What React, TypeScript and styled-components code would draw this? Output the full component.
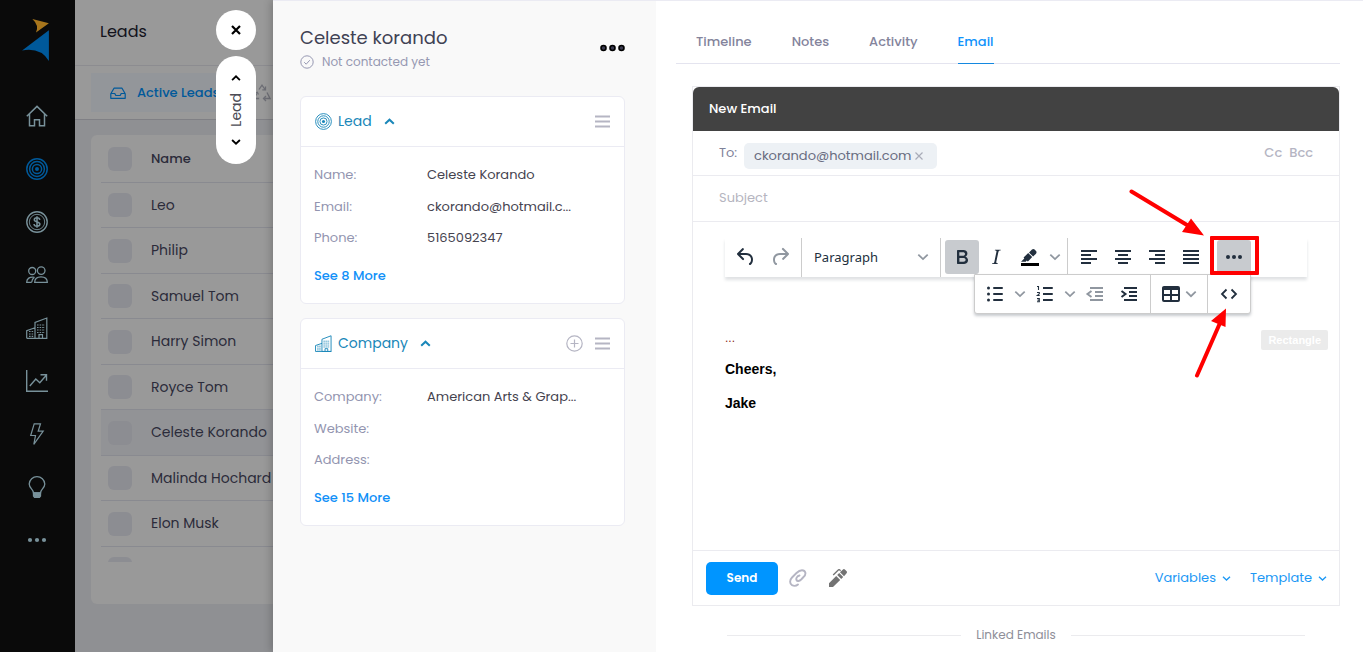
import React from "react";
import styled, { createGlobalStyle } from "styled-components";

const GlobalStyle = createGlobalStyle`
  *, *::before, *::after { box-sizing: border-box; }
  body { margin: 0; background: #fff; font-family: Poppins, Inter, "Liberation Sans", sans-serif; font-size: 13px; }
  button, input, select { font: inherit; color: inherit; }
  button { border: 0; background: none; padding: 0; cursor: pointer; }
  a { text-decoration: none; color: inherit; }
  h1, h2, p, ul, dl, dd { margin: 0; padding: 0; }
  svg { display: block; flex: none; }
`;

/* ---------- icons ---------- */

const Icon = styled.svg.attrs({ "aria-hidden": true })<{ $size?: number; $w?: number }>`
  width: ${(p) => p.$size ?? 22}px;
  height: ${(p) => p.$size ?? 22}px;
  fill: none;
  stroke: currentColor;
  stroke-width: ${(p) => p.$w ?? 1.4};
`;

const Glyph = styled.svg.attrs({ "aria-hidden": true, viewBox: "0 0 24 24" })`
  width: 24px;
  height: 24px;
  fill: currentColor;
`;

const LogoMark = () => (
  <svg width="27" height="42" viewBox="66 57 81 127" aria-hidden="true">
    <path d="M97 57L147 70L108 98Q118 76 97 57Z" fill="#a8761c" />
    <path d="M66 152L147 91V184Q122 142 66 152Z" fill="#00599a" />
  </svg>
);

const TargetIcon = ({ size = 22, w = 1.5 }: { size?: number; w?: number }) => (
  <Icon viewBox="0 0 22 22" $size={size} $w={w}>
    <circle cx="11" cy="11" r="10.2" />
    <circle cx="11" cy="11" r="7.4" />
    <circle cx="11" cy="11" r="4.6" />
    <circle cx="11" cy="11" r="2" fill="currentColor" stroke="none" />
  </Icon>
);

const HomeIcon = () => (
  <Icon viewBox="0 0 22 22" $w={1.5}>
    <path d="M.8 11.2L11 1.4l10.2 9.8M3.5 9v11.8h5v-6h5v6h5V9" />
  </Icon>
);

const CoinIcon = () => (
  <Icon viewBox="0 0 22 22" $w={1.4}>
    <circle cx="11" cy="11" r="10.2" />
    <circle cx="11" cy="11" r="7.7" strokeWidth="0.9" />
    <path d="M13.800 8.800c-.2-1.300-1.300-2-2.800-2s-2.700.7-2.700 2c0 2.800 5.600 1.400 5.600 4.300 0 1.400-1.300 2.100-2.900 2.100s-2.900-.8-3-2.200M11 5.200v11.600" strokeWidth="1.500" />
  </Icon>
);

const PeopleIcon = () => (
  <Icon viewBox="0 0 22 22" $w={1.3}>
    <circle cx="6.200" cy="7" r="3.500" />
    <circle cx="15.200" cy="6.600" r="3.800" />
    <path d="M8.700 18.300c0-3.500 2.200-5.400 6.300-5.400s6.300 1.900 6.300 5.400zM8.500 13.300c-5-.8-7.800 1.400-7.800 5h5M5.700 18.300c.1-2.200 1-3.800 2.800-5" />
  </Icon>
);

const BuildingIcon = ({ size = 22 }: { size?: number }) => (
  <Icon viewBox="0 0 22 22" $size={size} $w={1.2}>
    <path d="M.7 21.300V13.600l8.300-2.800M9 21.300V5.500l11.800-4.500v20.300zM.7 21.300h20.500M13 21v-3.300h3.500V21" />
    <path d="M3 14.500h5M3 17h5M3 19.300h5M11 8h8M11 10.500h8M11 13h8M11 15.500h8" strokeDasharray="1.600 1" />
  </Icon>
);

const TrendIcon = () => (
  <Icon viewBox="0 0 22 22" $w={1.4}>
    <path d="M.7 0v21.300H22M3.800 16l6-7 4 3.800L20.500 5M14.500 4.800h6v6" />
  </Icon>
);

const BoltIcon = () => (
  <Icon viewBox="0 0 22 22" $w={1.2}>
    <path d="M8.200.8h6.300l-2.300 7.400h5L7.800 21.300l1.700-8.800H4.700z" />
  </Icon>
);

const BulbIcon = () => (
  <Icon viewBox="0 0 22 22" $w={1.3}>
    <path d="M7.500 17c0-3.500-4.300-4.800-4.300-9A7.800 7.800 0 0 1 11 .7 7.800 7.800 0 0 1 18.800 8c0 4.200-4.300 5.500-4.300 9z" />
    <path d="M7.500 17h7v3l-1.200 1.500H8.700L7.500 20z" fill="currentColor" />
  </Icon>
);

const DotsIcon = () => (
  <Icon viewBox="0 0 22 22" $w={0}>
    <g fill="currentColor">
      <circle cx="4" cy="11" r="2.100" />
      <circle cx="11" cy="11" r="2.100" />
      <circle cx="18" cy="11" r="2.100" />
    </g>
  </Icon>
);

const ChevronUp = ({ size = 11, w = 2 }: { size?: number; w?: number }) => (
  <Icon viewBox="0 0 11 11" $size={size} $w={w}><path d="M1.200 7.800L5.500 3.700l4.300 4.100" /></Icon>
);
const ChevronDown = ({ size = 11, w = 2 }: { size?: number; w?: number }) => (
  <Icon viewBox="0 0 11 11" $size={size} $w={w}><path d="M1.200 3.300l4.300 4.100 4.300-4.100" /></Icon>
);

const InboxIcon = () => (
  <Icon viewBox="0 0 16 16" $size={16} $w={1.2}>
    <path d="M.8 8.800L4 3.200h8l3.200 5.600v4.500H.8zM.8 8.500h4l1 2h4.400l1-2h4" strokeLinejoin="round" />
  </Icon>
);

const RecycleIcon = () => (
  <Icon viewBox="0 0 18 18" $size={18} $w={1.3}>
    <path d="M6 5.500L9 1.200l3 4.300M12.500 2.500v3.300H9.300M3.700 9.500L1.200 14.500h5M2 9l2.300-.8 1.200 2.300M14 8.500l3 6h-5.500M13 12l-2.500 2.500L13 17" />
  </Icon>
);

const HamburgerIcon = () => (
  <Icon viewBox="0 0 15 15" $size={15} $w={2}><path d="M0 2.500h15M0 7.500h15M0 12.500h15" /></Icon>
);

const PlusCircleIcon = () => (
  <Icon viewBox="0 0 17 17" $size={17} $w={1.2}><circle cx="8.500" cy="8.500" r="7.700" /><path d="M4.500 8.500h8M8.500 4.500v8" /></Icon>
);

const CheckCircleIcon = () => (
  <Icon viewBox="0 0 14 14" $size={14} $w={1}><circle cx="7" cy="7" r="6.200" /><path d="M4.200 7.200l2 2 3.600-4" /></Icon>
);

/* ---------- page shell ---------- */

const Shell = styled.div`
  display: flex;
  min-height: 100vh;
  min-width: 1200px;
`;

const Sidebar = styled.nav`
  flex: 0 0 75px;
  padding-right: 1px;
  background: #0a0a0a;
  color: #78919a;
  display: flex;
  flex-direction: column;
`;

const LogoLink = styled.a`
  height: 89px;
  padding: 19px 22px 0;
`;

const NavLink = styled.a<{ $active?: boolean }>`
  height: 53px;
  display: flex;
  align-items: center;
  justify-content: center;
  color: ${(p) => (p.$active ? "#00599a" : "inherit")};
`;

const LeadsPage = styled.section`
  position: relative;
  flex: 0 0 198px;
  min-width: 0;
  background: #8f9093;
  color: #2b2b3a;
`;

const Clip = styled.div`
  overflow: hidden;
  height: 100%;
  white-space: nowrap;
`;

const LeadsTitle = styled.h1`
  height: 66px;
  line-height: 64px;
  padding-left: 25px;
  font-size: 16px;
  font-weight: 400;
  color: #12121c;
  background: #999;
  border-bottom: 1px solid #8c8c90;
`;

const FilterBar = styled.div`
  height: 54px;
  padding: 7px 0 0 16px;
  display: flex;
  background: #999;
  border-bottom: 1px solid #808085;
`;

const FilterTab = styled.button`
  display: flex;
  align-items: center;
  gap: 11px;
  height: 39px;
  padding: 0 16px 0 19px;
  background: #93969a;
  color: #00599a;
  font-size: 13px;
  font-weight: 500;
`;

const RecycleTab = styled.button`
  height: 39px;
  margin-left: 18px;
  color: #6d6e75;
`;

const LeadsCard = styled.div`
  margin: 15px 0 0 16px;
  padding: 0 0 42px 10px;
  width: 260px;
  background: #999;
  border-radius: 6px;
`;

const LeadsScroll = styled.div`
  height: 427px;
  overflow: hidden;
`;

const LeadsTable = styled.table`
  width: 100%;
  border-spacing: 0;
  font-size: 14px;

  th, td {
    height: 45px;
    padding: 0;
    text-align: left;
    border-bottom: 1px solid #898a90;
    font-weight: 400;
  }
  th { height: 48px; font-weight: 500; font-size: 13px; }
  th:first-child, td:first-child { width: 50px; padding-left: 7px; }
  tbody tr:nth-child(even) td { height: 46px; }
`;

const LeadRow = styled.tr<{ $selected?: boolean }>`
  background: ${(p) => (p.$selected ? "#929396" : "transparent")};
`;

const RowCheck = styled.input.attrs({ type: "checkbox" })`
  appearance: none;
  display: block;
  width: 24px;
  height: 24px;
  margin: 0;
  border-radius: 6px;
  background: #8c8d92;
`;

const DrawerHandles = styled.div`
  position: absolute;
  top: 10px;
  right: 17px;
  z-index: 2;
  display: flex;
  flex-direction: column;
  gap: 6px;
  color: #000;
`;

const CloseButton = styled.button`
  width: 40px;
  height: 40px;
  border-radius: 20px;
  background: #fff;
  display: grid;
  place-items: center;
`;

const Pager = styled.div`
  width: 40px;
  height: 108px;
  padding: 17px 0;
  border-radius: 20px;
  background: #fff;
  display: flex;
  flex-direction: column;
  align-items: center;
  justify-content: space-between;
`;

const PagerLabel = styled.span`
  writing-mode: vertical-rl;
  transform: rotate(180deg);
  color: #4c4c55;
  font-size: 14px;
`;

/* ---------- lead details ---------- */

const Details = styled.aside`
  flex: 0 0 383px;
  padding: 21px 31px 0 27px;
  background: #f9f9f9;
  border-top: 1px solid #ebebf3;
  box-shadow: -2px 0 8px rgba(0, 0, 0, 0.2);
  z-index: 1;
`;

const Person = styled.header`
  display: flex;
  align-items: center;
  justify-content: space-between;
  height: 52px;
  margin-bottom: 22px;
`;

const PersonName = styled.h2`
  font-size: 18px;
  line-height: 27px;
  font-weight: 400;
  color: #3f4254;
`;

const Status = styled.p`
  display: flex;
  align-items: center;
  gap: 8px;
  line-height: 21px;
  font-size: 12px;
  color: #9698b2;
`;

const MoreButton = styled.button`
  color: #08080c;
`;

const InfoCard = styled.section`
  height: 208px;
  margin-bottom: 14px;
  background: #fff;
  border: 1px solid #ebebf3;
  border-radius: 6px;
`;

const InfoHead = styled.header`
  display: flex;
  align-items: center;
  height: 50px;
  padding: 0 14px;
  border-bottom: 1px solid #ebebf3;
  color: #1a87b9;
`;

const InfoToggle = styled.button`
  display: flex;
  align-items: center;
  gap: 6px;
  font-size: 14px;
  margin-right: auto;

  svg:last-child { margin-left: 6px; }
`;

const InfoAction = styled.button`
  margin-left: 12px;
  color: #b5b5c3;
`;

const Fields = styled.dl`
  display: grid;
  grid-template-columns: 113px 1fr;
  grid-auto-rows: 32px 31px;
  align-items: center;
  padding: 12px 14px 0 13px;
  color: #9395b0;
`;

const FieldValue = styled.dd`
  color: #45434f;
  white-space: nowrap;
`;

const SeeMore = styled.a`
  display: inline-block;
  margin: 12px 13px;
  line-height: 20px;
  font-weight: 500;
  color: #1090f8;
`;

/* ---------- email area ---------- */

const Main = styled.main`
  flex: 1 1 0;
  min-width: 0;
  padding: 0 23px 0 20px;
  border-top: 1px solid #ebebf3;
  background: #fff;
  position: relative;
  z-index: 1;
`;

const Tabs = styled.nav`
  display: flex;
  gap: 40px;
  height: 63px;
  padding: 19px 20px 0;
  border-bottom: 1px solid #e4e4ef;
`;

const Tab = styled.a<{ $active?: boolean }>`
  height: 44px;
  line-height: 43px;
  font-weight: 500;
  color: ${(p) => (p.$active ? "#1193fb" : "#84849c")};
  border-bottom: 1px solid ${(p) => (p.$active ? "#1488e0" : "transparent")};
`;

const Composer = styled.form`
  position: relative;
  margin: 22px 0 0 16px;
  border: 1px solid #ebebef;
`;

const ComposerTitle = styled.h2`
  height: 44px;
  padding-left: 16px;
  line-height: 43px;
  font-size: 13px;
  font-weight: 500;
  color: #fff;
  background: #424242;
  border-radius: 6px 6px 0 0;
`;

const AddressRow = styled.div`
  display: flex;
  align-items: flex-start;
  height: 45px;
  padding: 12px 26px 0;
  border-bottom: 1px solid #ebebf0;
  color: #7e8299;
`;

const ToLabel = styled.label`
  width: 25px;
  line-height: 20px;
`;

const Chip = styled.span`
  display: flex;
  align-items: center;
  gap: 4px;
  height: 26px;
  padding: 0 14px 0 10px;
  border-radius: 5px;
  background: #edf1f5;
  color: #686c80;
`;

const ChipRemove = styled.button`
  color: #a9acb8;
`;

const ToInput = styled.input`
  flex: 1;
  min-width: 0;
  border: 0;
  outline: 0;
  background: transparent;
`;

const CopyButton = styled.button`
  margin-left: 7px;
  line-height: 20px;
  font-weight: 500;
  color: #b5b5c3;
`;

const SubjectInput = styled.input`
  display: block;
  width: 100%;
  height: 46px;
  padding: 0 26px 2px;
  border: 0;
  border-bottom: 1px solid #ebebf0;
  outline: 0;

  &::placeholder { color: #b5b5c0; opacity: 1; }
`;

const EditorArea = styled.div`
  height: 329px;
  padding: 16px 32px 0;
  border-bottom: 1px solid #ebebf0;
`;

const Toolbar = styled.div`
  display: flex;
  height: 39px;
  background: #fff;
  box-shadow: 0 3px 3px rgba(34, 47, 62, 0.14);
  color: #222f3e;
`;

const ToolGroup = styled.div`
  position: relative;
  display: flex;
  align-items: flex-start;
  padding: 2px 4px 3px;
  border-right: 1px solid #ccc;

  &:last-child { border-right: 0; }
`;

const Tool = styled.button<{ $pressed?: boolean; $muted?: boolean; $wide?: boolean }>`
  display: flex;
  align-items: center;
  justify-content: center;
  width: ${(p) => (p.$wide ? 48 : 34)}px;
  height: 34px;
  border-radius: 3px;
  background: ${(p) => (p.$pressed ? "#c8cbcf" : "transparent")};
  color: ${(p) => (p.$muted ? "#9097a0" : "#222f3e")};
`;

const Caret = styled.button`
  display: grid;
  place-items: center;
  width: 16px;
  height: 34px;
  color: #9097a0;
`;

const FormatBox = styled.div`
  display: flex;
  align-items: center;
  width: 130px;
  height: 34px;
  padding: 0 7px 0 8px;
  color: #9097a0;
`;

const FormatSelect = styled.select`
  appearance: none;
  flex: 1;
  min-width: 0;
  padding: 0;
  border: 0;
  outline: 0;
  background: transparent;
  font-family: "Noto Sans", "Open Sans", sans-serif;
  font-size: 13px;
  color: #222f3e;
`;

const Overflow = styled.div`
  position: absolute;
  top: 36px;
  right: 4px;
  display: flex;
  height: 40px;
  background: #fff;
  border: 1px solid #ccc;
  border-radius: 0 0 3px 3px;
  box-shadow: 0 2px 3px rgba(34, 47, 62, 0.25);

  ${ToolGroup}:first-child { padding-left: 3px; }
`;

const Highlight = styled.div`
  position: absolute;
  top: -2px;
  left: -3px;
  width: 49px;
  height: 39px;
  border: 4px solid #f00;
  border-radius: 1px;
  pointer-events: none;
`;

const Arrows = styled.svg`
  position: absolute;
  top: -50px;
  left: -84px;
  z-index: 1;
  pointer-events: none;
  fill: #f00;
  stroke: #f00;
`;

const ShapeTag = styled.span`
  position: absolute;
  top: 243px;
  right: 11px;
  padding: 0 7px;
  line-height: 20px;
  border-radius: 2px;
  background: #ebebeb;
  color: #fff;
  font-family: "Liberation Sans", sans-serif;
  font-size: 11px;
  font-weight: 700;
`;

const Message = styled.div`
  padding-top: 52px;
  font-family: "Liberation Sans", sans-serif;
  font-size: 14px;
  font-weight: 700;
  line-height: 20px;
  color: #000;

  p + p { margin-top: 14px; }
  p:first-child { font-weight: 400; font-size: 12px; margin-bottom: -2px; line-height: 18px; color: #8a2b20; }
`;

const ComposerFoot = styled.footer`
  display: flex;
  align-items: center;
  height: 54px;
  padding: 0 12px 0 13px;
`;

const SendButton = styled.button`
  width: 72px;
  height: 33px;
  border-radius: 5px;
  background: #0095ff;
  color: #fff;
  font-size: 12px;
  font-weight: 600;
`;

const FootIcon = styled.button<{ $dark?: boolean }>`
  margin-left: ${(p) => (p.$dark ? 22 : 11)}px;
  color: ${(p) => (p.$dark ? "#737373" : "#b5b5c3")};
`;

const MenuButton = styled.button`
  display: flex;
  align-items: center;
  gap: 6px;
  margin-left: 19px;
  color: #1c98f5;
`;

const Spacer = styled.span`
  flex: 1;
`;

const Divider = styled.h2`
  display: flex;
  align-items: center;
  gap: 15px;
  margin: 19px 35px 0 51px;
  line-height: 20px;
  font-size: 12px;
  font-weight: 400;
  color: #8e8e98;

  &::before, &::after { content: ""; flex: 1; height: 1px; background: #ebebee; }
`;

const navItems = [
  { label: "Home", icon: <HomeIcon /> },
  { label: "Leads", icon: <TargetIcon />, active: true },
  { label: "Deals", icon: <CoinIcon /> },
  { label: "Contacts", icon: <PeopleIcon /> },
  { label: "Companies", icon: <BuildingIcon /> },
  { label: "Reports", icon: <TrendIcon /> },
  { label: "Automation", icon: <BoltIcon /> },
  { label: "Tips", icon: <BulbIcon /> },
  { label: "More", icon: <DotsIcon /> },
];

const leads = ["Leo", "Philip", "Samuel Tom", "Harry Simon", "Royce Tom", "Celeste Korando", "Malinda Hochard", "Elon Musk", ""];

const alignments = [
  { label: "Align left", d: "M4 5h16v2H4zM4 9h10v2H4zM4 13h16v2H4zM4 17h10v2H4z" },
  { label: "Align center", d: "M4 5h16v2H4zM7 9h10v2H7zM4 13h16v2H4zM7 17h10v2H7z" },
  { label: "Align right", d: "M4 5h16v2H4zM10 9h10v2H10zM4 13h16v2H4zM10 17h10v2H10z" },
  { label: "Justify", d: "M4 5h16v2H4zM4 9h16v2H4zM4 13h16v2H4zM4 17h16v2H4z" },
];

type InfoProps = { title: string; icon: React.ReactNode; fields: [string, string][]; more: string; addable?: boolean };

const Info = ({ title, icon, fields, more, addable }: InfoProps) => (
  <InfoCard>
    <InfoHead>
      <InfoToggle>{icon}{title}<ChevronUp /></InfoToggle>
      {addable && <InfoAction aria-label="Add"><PlusCircleIcon /></InfoAction>}
      <InfoAction aria-label="Options"><HamburgerIcon /></InfoAction>
    </InfoHead>
    <Fields>
      {fields.map(([label, value]) => (
        <React.Fragment key={label}>
          <dt>{label}</dt>
          <FieldValue>{value}</FieldValue>
        </React.Fragment>
      ))}
    </Fields>
    <SeeMore href="#">{more}</SeeMore>
  </InfoCard>
);

const SplitCaret = ({ label }: { label: string }) => (
  <Caret type="button" aria-label={label}><ChevronDown size={12} w={1.6} /></Caret>
);

export default function App() {
  return (
    <>
      <GlobalStyle />
      <Shell>
        <Sidebar>
          <LogoLink href="#" aria-label="Dashboard"><LogoMark /></LogoLink>
          {navItems.map((n) => (
            <NavLink key={n.label} href="#" aria-label={n.label} $active={n.active}>{n.icon}</NavLink>
          ))}
        </Sidebar>

        <LeadsPage>
          <Clip>
            <LeadsTitle>Leads</LeadsTitle>
            <FilterBar>
              <FilterTab><InboxIcon />Active Leads</FilterTab>
              <RecycleTab aria-label="Recycled"><RecycleIcon /></RecycleTab>
            </FilterBar>
            <LeadsCard>
              <LeadsScroll>
                <LeadsTable>
                  <thead>
                    <tr><th><RowCheck aria-label="Select all" /></th><th>Name</th></tr>
                  </thead>
                  <tbody>
                    {leads.map((name) => (
                      <LeadRow key={name} $selected={name === "Celeste Korando"}>
                        <td><RowCheck aria-label={`Select ${name}`} /></td>
                        <td>{name}</td>
                      </LeadRow>
                    ))}
                  </tbody>
                </LeadsTable>
              </LeadsScroll>
            </LeadsCard>
          </Clip>
          <DrawerHandles>
            <CloseButton aria-label="Close">
              <Icon viewBox="0 0 10 10" $size={10} $w={2.2}><path d="M1 1l8 8M9 1L1 9" /></Icon>
            </CloseButton>
            <Pager>
              <button aria-label="Previous lead"><ChevronUp size={10} /></button>
              <PagerLabel>Lead</PagerLabel>
              <button aria-label="Next lead"><ChevronDown size={10} /></button>
            </Pager>
          </DrawerHandles>
        </LeadsPage>

        <Details>
          <Person>
            <div>
              <PersonName>Celeste korando</PersonName>
              <Status><CheckCircleIcon />Not contacted yet</Status>
            </div>
            <MoreButton aria-label="More actions">
              <svg width="25" height="8" viewBox="0 0 25 8">
                <g fill="#3b3b50" stroke="#000" strokeWidth="1.600">
                  <circle cx="3.500" cy="4" r="2.500" /><circle cx="12.500" cy="4" r="2.500" /><circle cx="21.500" cy="4" r="2.500" />
                </g>
              </svg>
            </MoreButton>
          </Person>
          <Info
            title="Lead"
            icon={<TargetIcon size={17} w={1.2} />}
            fields={[["Name:", "Celeste Korando"], ["Email:", "ckorando@hotmail.c..."], ["Phone:", "5165092347"]]}
            more="See 8 More"
          />
          <Info
            title="Company"
            icon={<BuildingIcon size={17} />}
            fields={[["Company:", "American Arts & Grap..."], ["Website:", ""], ["Address:", ""]]}
            more="See 15 More"
            addable
          />
        </Details>

        <Main>
          <Tabs>
            <Tab href="#">Timeline</Tab>
            <Tab href="#">Notes</Tab>
            <Tab href="#">Activity</Tab>
            <Tab href="#" $active>Email</Tab>
          </Tabs>

          <Composer onSubmit={(e) => e.preventDefault()}>
            <ComposerTitle>New Email</ComposerTitle>
            <AddressRow>
              <ToLabel htmlFor="to">To:</ToLabel>
              <Chip>
                ckorando@hotmail.com
                <ChipRemove type="button" aria-label="Remove recipient">
                  <Icon viewBox="0 0 8 8" $size={8} $w={1.2}><path d="M.5.5l7 7M7.500.5l-7 7" /></Icon>
                </ChipRemove>
              </Chip>
              <ToInput id="to" />
              <CopyButton type="button">Cc</CopyButton>
              <CopyButton type="button">Bcc</CopyButton>
            </AddressRow>
            <SubjectInput aria-label="Subject" placeholder="Subject" />

            <EditorArea>
              <Toolbar>
                <ToolGroup>
                  <Tool type="button" aria-label="Undo">
                    <Glyph><path d="M6.400 8H12c3.700 0 6.200 2 6.800 5.100.6 2.700-.4 5.600-2.300 6.800a1 1 0 0 1-1-1.800c1.100-.6 1.800-2.700 1.400-4.600-.5-2.100-2.100-3.500-4.900-3.500H6.400l3.300 3.300a1 1 0 1 1-1.400 1.400l-5-5a1 1 0 0 1 0-1.400l5-5a1 1 0 0 1 1.400 1.400L6.400 8z" /></Glyph>
                  </Tool>
                  <Tool type="button" aria-label="Redo" $muted>
                    <Glyph><path d="M17.600 10H12c-2.800 0-4.400 1.400-4.900 3.500-.4 2 .3 4 1.400 4.600a1 1 0 1 1-1 1.800c-2-1.200-2.900-4.100-2.300-6.800.6-3 3-5.100 6.800-5.100h5.600l-3.300-3.300a1 1 0 1 1 1.400-1.400l5 5a1 1 0 0 1 0 1.400l-5 5a1 1 0 0 1-1.400-1.400l3.300-3.300z" /></Glyph>
                  </Tool>
                </ToolGroup>
                <ToolGroup>
                  <FormatBox>
                    <FormatSelect aria-label="Text format" defaultValue="p">
                      <option value="p">Paragraph</option>
                      <option value="h1">Heading 1</option>
                    </FormatSelect>
                    <ChevronDown size={12} w={1.6} />
                  </FormatBox>
                </ToolGroup>
                <ToolGroup>
                  <Tool type="button" aria-label="Bold" $pressed>
                    <Glyph><path fillRule="evenodd" d="M7.800 19c-.3 0-.5 0-.6-.2l-.2-.5V5.700c0-.2 0-.4.2-.5l.6-.2h5c1.500 0 2.700.3 3.500 1 .7.600 1.100 1.400 1.100 2.500a3 3 0 0 1-.6 1.900c-.4.600-1 1-1.600 1.200.4.100.9.300 1.300.600s.8.700 1 1.200c.4.400.5 1 .5 1.600 0 1.300-.4 2.300-1.300 3-.8.700-2.100 1-3.800 1H7.800zm5-8.300c.600 0 1.200-.100 1.600-.500.4-.300.600-.700.600-1.300 0-1.100-.8-1.700-2.300-1.700H9.300v3.500h3.400zm.5 6c.7 0 1.300-.100 1.700-.400.4-.400.600-.9.600-1.500s-.2-1-.7-1.400c-.4-.3-1-.400-2-.400H9.400v3.800h4z" /></Glyph>
                  </Tool>
                  <Tool type="button" aria-label="Italic">
                    <Glyph><path d="M16.700 4.700l-.1.900h-.3c-.6 0-1 0-1.400.3-.3.300-.4.600-.5 1.100l-2.100 9.800v.6c0 .5.400.8 1.400.8h.2l-.2.800H8l.2-.8h.2c1.100 0 1.800-.5 2-1.500l2-9.800.1-.5c0-.6-.4-.8-1.400-.8h-.3l.2-.9h5.800z" /></Glyph>
                  </Tool>
                  <Tool type="button" aria-label="Highlight colour">
                    <Glyph>
                      <path d="M3 18h18v3H3z" fill="#000" />
                      <path d="M7.700 16.700H3l3.300-3.300-.7-.8L10.200 8l4 4.100-4 4.200c-.2.200-.6.200-.8 0l-.6-.7-1.100 1.100zm5-7.500L11 7.400l3-2.900a2 2 0 0 1 2.600 0L18 6c.7.700.7 2 0 2.700l-2.900 2.900-1.800-1.800-.5-.6z" />
                    </Glyph>
                  </Tool>
                  <SplitCaret label="Highlight options" />
                </ToolGroup>
                <ToolGroup>
                  {alignments.map((a) => (
                    <Tool key={a.label} type="button" aria-label={a.label}><Glyph><path d={a.d} /></Glyph></Tool>
                  ))}
                </ToolGroup>
                <ToolGroup>
                  <Tool type="button" aria-label="More tools" $pressed>
                    <Glyph><circle cx="6" cy="12" r="2" /><circle cx="12" cy="12" r="2" /><circle cx="18" cy="12" r="2" /></Glyph>
                  </Tool>
                  <Overflow>
                    <ToolGroup>
                      <Tool type="button" aria-label="Bullet list">
                        <Glyph><path d="M11 5h8a1 1 0 0 1 0 2h-8a1 1 0 0 1 0-2zm0 6h8a1 1 0 0 1 0 2h-8a1 1 0 0 1 0-2zm0 6h8a1 1 0 0 1 0 2h-8a1 1 0 0 1 0-2z" /><circle cx="5.500" cy="6" r="1.500" /><circle cx="5.500" cy="12" r="1.500" /><circle cx="5.500" cy="18" r="1.500" /></Glyph>
                      </Tool>
                      <SplitCaret label="Bullet options" />
                      <Tool type="button" aria-label="Numbered list">
                        <Glyph><path d="M10 5h9a1 1 0 0 1 0 2h-9zM10 11h9a1 1 0 0 1 0 2h-9zM10 17h9a1 1 0 0 1 0 2h-9z" /><path d="M4 4.500h1.500V8M4 10.500h2.300v1.300L4.300 13.500h2.400M4 16.500h2.300v3.200H4M4.500 18.100h1.800" fill="none" stroke="currentColor" strokeWidth="1.100" /></Glyph>
                      </Tool>
                      <SplitCaret label="Numbering options" />
                      <Tool type="button" aria-label="Decrease indent" $muted>
                        <Glyph><path d="M7 5h13v2H7zM12 9h8v2h-8zM12 13h8v2h-8zM7 17h13v2H7z" /><path d="M8.500 9l-4 3 4 3" fill="none" stroke="currentColor" strokeWidth="2" /></Glyph>
                      </Tool>
                      <Tool type="button" aria-label="Increase indent">
                        <Glyph><path d="M7 5h13v2H7zM12 9h8v2h-8zM12 13h8v2h-8zM7 17h13v2H7z" /><path d="M4.500 9l4 3-4 3" fill="none" stroke="currentColor" strokeWidth="2" /></Glyph>
                      </Tool>
                    </ToolGroup>
                    <ToolGroup>
                      <Tool type="button" aria-label="Table" $wide>
                        <Glyph><path fillRule="evenodd" d="M5 4h14a2 2 0 0 1 2 2v12a2 2 0 0 1-2 2H5a2 2 0 0 1-2-2V6c0-1.100.9-2 2-2zM5 14v4h6v-4zm14 0h-6v4h6zm0-6h-6v4h6zM5 12h6V8H5z" /></Glyph>
                        <Icon viewBox="0 0 16 16" $size={16} $w={1.8} color="#9097a0"><path d="M3.300 5.700L8 10.200l4.700-4.500" /></Icon>
                      </Tool>
                    </ToolGroup>
                    <ToolGroup>
                      <Tool type="button" aria-label="Source code">
                        <Glyph><path d="M9.500 7.500L5 12l4.500 4.500M14.500 7.500L19 12l-4.500 4.500" fill="none" stroke="currentColor" strokeWidth="1.800" /></Glyph>
                      </Tool>
                    </ToolGroup>
                  </Overflow>
                  <Highlight />
                  <Arrows width="134" height="192" viewBox="0 0 134 192" aria-hidden="true">
                    <path d="M2.500 3.500L58 37M68 187.500L91 135" strokeWidth="4" strokeLinecap="round" />
                    <path d="M75 47.500L53 44L62 30.500zM97 120.500L82 133L96.500 139z" stroke="none" />
                  </Arrows>
                </ToolGroup>
              </Toolbar>
              <Message>
                <p>...</p>
                <p>Cheers,</p>
                <p>Jake</p>
              </Message>
            </EditorArea>
            <ShapeTag>Rectangle</ShapeTag>

            <ComposerFoot>
              <SendButton type="submit">Send</SendButton>
              <FootIcon type="button" aria-label="Attach file">
                <Icon viewBox="0 0 18 18" $size={18} $w={1.9}>
                  <path strokeLinecap="round" d="M10.500 6.500C8 7 6.800 9.500 7.500 11C8.300 12.800 10.500 12 12.200 10.500L14.500 8C17.800 5 16.500 1.200 13 1.200C10.500 1.200 9 2.500 7.500 4L3 8.500C.5 11 .5 14.800 3 16.200C5 17.200 7.500 16.800 9 15.500" />
                </Icon>
              </FootIcon>
              <FootIcon type="button" aria-label="Signature" $dark>
                <svg width="18" height="18" viewBox="0 0 18 18" fill="currentColor">
                  <path d="M0 18v-3.800L7.200 7l4 4L4 18zM8.200 6l2-2 4 4-2 2z" />
                  <path d="M11 3.200L13.700.7c.8-.8 1.700-.8 2.400 0l1.300 1.300c.8.800.8 1.600 0 2.400L15 7.200z" />
                  <path d="M4.200 6L9.300 1c.5-.5 1-.5 1.500 0l.8.8" fill="none" stroke="currentColor" strokeWidth="1.300" />
                </svg>
              </FootIcon>
              <Spacer />
              <MenuButton type="button">Variables<ChevronDown size={9} w={1.6} /></MenuButton>
              <MenuButton type="button">Template<ChevronDown size={9} w={1.6} /></MenuButton>
            </ComposerFoot>
          </Composer>
          <Divider>Linked Emails</Divider>
        </Main>
      </Shell>
    </>
  );
}
